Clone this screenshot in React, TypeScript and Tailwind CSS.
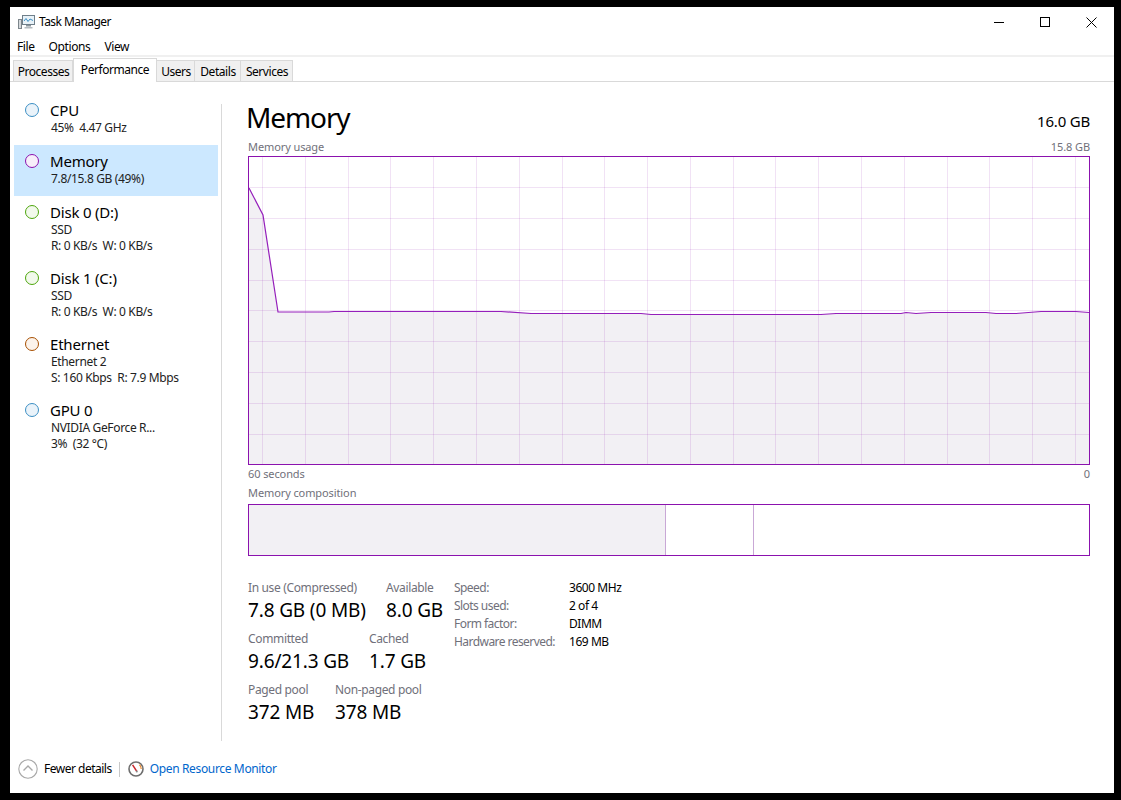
import React from "react";

const font = { fontFamily: '"Noto Sans", "Open Sans", sans-serif' };

const tabs = [
  { label: "Processes", w: "w-[60px]" },
  { label: "Performance", w: "w-[84px]", active: true },
  { label: "Users", w: "w-[38px]" },
  { label: "Details", w: "w-[46px]" },
  { label: "Services", w: "w-[52px]" },
];

const sideItems = [
  { name: "CPU", lines: ["45%  4.47 GHz"], ring: "border-[#3c8fc4]", fill: "bg-[#eaf3fa]", h: "h-[51px]" },
  { name: "Memory", lines: ["7.8/15.8 GB (49%)"], ring: "border-[#8b12ae]", fill: "bg-[#f7eefa]", h: "h-[51px]", active: true },
  { name: "Disk 0 (D:)", lines: ["SSD", "R: 0 KB/s  W: 0 KB/s"], ring: "border-[#4da60c]", fill: "bg-[#f2f9ec]", h: "h-[66px]" },
  { name: "Disk 1 (C:)", lines: ["SSD", "R: 0 KB/s  W: 0 KB/s"], ring: "border-[#4da60c]", fill: "bg-[#f2f9ec]", h: "h-[66px]" },
  { name: "Ethernet", lines: ["Ethernet 2", "S: 160 Kbps  R: 7.9 Mbps"], ring: "border-[#a74f01]", fill: "bg-[#fcf3eb]", h: "h-[66px]" },
  { name: "GPU 0", lines: ["NVIDIA GeForce R...", "3%  (32 °C)"], ring: "border-[#3c8fc4]", fill: "bg-[#eaf3fa]", h: "h-[66px]" },
];

const statRows = [
  [
    { label: "In use (Compressed)", value: "7.8 GB (0 MB)", w: "w-[138px]" },
    { label: "Available", value: "8.0 GB", w: "" },
  ],
  [
    { label: "Committed", value: "9.6/21.3 GB", w: "w-[121px]" },
    { label: "Cached", value: "1.7 GB", w: "" },
  ],
  [
    { label: "Paged pool", value: "372 MB", w: "w-[87px]" },
    { label: "Non-paged pool", value: "378 MB", w: "" },
  ],
];

const specs = [
  ["Speed:", "3600 MHz"],
  ["Slots used:", "2 of 4"],
  ["Form factor:", "DIMM"],
  ["Hardware reserved:", "169 MB"],
];

const linePoints =
  "0,31 14,58 29,155 80,155 85,154.5 252,154.5 282,156.5 392,156.5 402,157.5 572,157.5 587,156.5 652,156.5 657,155.5 667,156.5 682,155.5 737,155.5 747,156.5 767,156.5 792,154.5 827,154.5 840,155.5";

function MemoryChart() {
  const xs = Array.from({ length: 20 }, (_, i) => Math.round(13 + i * 42.79) + 0.5);
  const ys = [30, 61, 92, 123, 153, 184, 215, 246, 277].map((y) => y + 0.5);
  return (
    <svg width="840" height="307" className="block">
      <polygon points={`0,307 ${linePoints} 840,307`} fill="#f2f0f4" />
      {xs.map((x) => (
        <line key={x} x1={x} x2={x} y1="0" y2="307" stroke="#8b12ae" strokeOpacity="0.12" />
      ))}
      {ys.map((y) => (
        <line key={y} x1="0" x2="840" y1={y} y2={y} stroke="#8b12ae" strokeOpacity="0.12" />
      ))}
      <polyline points={linePoints} fill="none" stroke="#951fbb" strokeWidth="1.2" />
    </svg>
  );
}

function AppIcon() {
  return (
    <svg width="17" height="16" viewBox="0 0 17 16">
      <rect x="4.5" y="1.5" width="12" height="9" fill="#e8f2f8" stroke="#6f7f8a" />
      <polyline points="6,7 8,4.5 10,7.5 12,5 15,6.5" fill="none" stroke="#3c8fc4" />
      <rect x="8" y="11" width="5" height="1.5" fill="#8a959c" />
      <rect x="6.5" y="13" width="8" height="1.5" fill="#b5bcc1" />
      <rect x="0.5" y="5.5" width="3" height="9" fill="#d5d9dc" stroke="#7d868c" />
    </svg>
  );
}

function MonitorIcon() {
  return (
    <svg width="16" height="16" viewBox="0 0 16 16">
      <circle cx="8" cy="8" r="7" fill="#fff" stroke="#6d6d6d" strokeWidth="1.6" />
      <path d="M11.5 3.8 A5.4 5.4 0 0 1 13.2 8" fill="none" stroke="#e8872c" strokeWidth="1.2" />
      <line x1="4.6" y1="3.8" x2="8.8" y2="10.4" stroke="#c9252b" strokeWidth="1.5" />
      <circle cx="8.8" cy="10.6" r="1" fill="#8a8a8a" />
    </svg>
  );
}

export default function App() {
  return (
    <div className="h-[800px] w-[1121px] overflow-hidden bg-black pl-[10px] pt-[7px]" style={font}>
      <div className="flex h-[786px] w-[1104px] flex-col bg-white text-[12px] text-[#000]">
        {/* title bar */}
        <div className="flex h-[30px] items-center pl-[8px]">
          <AppIcon />
          <span className="ml-[4px] tracking-[-0.55px]">Task Manager</span>
          <div className="ml-auto flex items-center">
            <div className="flex h-[30px] w-[46px] items-center justify-center">
              <div className="h-px w-[10px] bg-black" />
            </div>
            <div className="flex h-[30px] w-[46px] items-center justify-center">
              <div className="h-[10px] w-[10px] border border-black" />
            </div>
            <div className="flex h-[30px] w-[46px] items-center justify-center">
              <svg width="11" height="11" viewBox="0 0 11 11">
                <path d="M0.5 0.5 L10.5 10.5 M10.5 0.5 L0.5 10.5" stroke="#000" fill="none" />
              </svg>
            </div>
          </div>
        </div>

        {/* menu */}
        <div className="flex h-[18px] items-center gap-[14px] pl-[7px] pt-[2px] tracking-[-0.4px]">
          <span>File</span>
          <span>Options</span>
          <span>View</span>
        </div>
        <div className="h-[2px] bg-[#f0f0f0]" />

        {/* tabs */}
        <div className="flex h-[25px] items-end border-b border-[#d9d9d9] pl-[3px]">
          {tabs.map((t) =>
            t.active ? (
              <div
                key={t.label}
                className={`${t.w} relative z-10 -mb-px flex h-[24px] justify-center border border-b-0 border-[#d9d9d9] bg-white pt-[2px] tracking-[-0.45px]`}
              >
                {t.label}
              </div>
            ) : (
              <div
                key={t.label}
                className={`${t.w} flex h-[21px] items-center justify-center border border-b-0 border-l-0 first:border-l border-[#d9d9d9] bg-[#f0f0f0] pl-[1px] pt-[2px] tracking-[-0.45px]`}
              >
                {t.label}
              </div>
            )
          )}
        </div>

        {/* body */}
        <div className="flex flex-1">
          {/* sidebar */}
          <div className="ml-[4px] mt-[12px] w-[204px]">
            {sideItems.map((it) => (
              <div
                key={it.name}
                className={`${it.h} ${it.active ? "bg-[#cce8ff]" : ""} flex pl-[11px] pt-[6px]`}
              >
                <div className={`${it.ring} ${it.fill} mt-[3px] h-[14px] w-[14px] rounded-full border`} />
                <div className="ml-[11px]">
                  <div className="h-[20px] text-[15px] leading-[20px] tracking-[-0.2px]">{it.name}</div>
                  {it.lines.map((l) => (
                    <div key={l} className="ml-px h-[16px] whitespace-pre leading-[16px] tracking-[-0.35px] text-[#222]">
                      {l}
                    </div>
                  ))}
                </div>
              </div>
            ))}
          </div>

          {/* divider */}
          <div className="ml-[3px] mt-[22px] h-[637px] w-px bg-[#d9d9d9]" />

          {/* main */}
          <div className="ml-[26px] w-[842px]">
            <div className="mt-[15px] flex h-[40px] items-center justify-between">
              <span className="-ml-[2px] text-[28px] leading-[40px] tracking-[-1.1px]">Memory</span>
              <span className="mt-[8px] text-[15px] tracking-[-0.2px]">16.0 GB</span>
            </div>
            <div className="flex h-[19px] items-center justify-between pt-[2px] text-[11px] tracking-[-0.1px] text-[#70707a]">
              <span>Memory usage</span>
              <span>15.8 GB</span>
            </div>
            <div className="h-[309px] border border-[#8b12ae]">
              <MemoryChart />
            </div>
            <div className="flex h-[19px] items-center justify-between text-[11px] tracking-[-0.1px] text-[#70707a]">
              <span>60 seconds</span>
              <span>0</span>
            </div>
            <div className="flex h-[20px] items-center pb-[2px] text-[11px] tracking-[-0.1px] text-[#70707a]">
              Memory composition
            </div>
            <div className="flex h-[52px] border border-[#8b12ae]">
              <div className="w-[417px] border-r border-[#c9a8d6] bg-[#f2f0f4]" />
              <div className="w-[88px] border-r border-[#c9a8d6]" />
            </div>

            {/* stats */}
            <div className="mt-[23px] flex">
              <div className="w-[206px]">
                {statRows.map((row, i) => (
                  <div key={i} className="flex h-[51px]">
                    {row.map((s) => (
                      <div key={s.label} className={s.w}>
                        <div className="h-[18px] whitespace-nowrap text-[12px] leading-[18px] tracking-[-0.35px] text-[#70707a]">
                          {s.label}
                        </div>
                        <div className="whitespace-nowrap text-[19px] leading-[26px] tracking-[-0.15px]">{s.value}</div>
                      </div>
                    ))}
                  </div>
                ))}
              </div>
              <div>
                {specs.map(([k, v]) => (
                  <div key={k} className="flex h-[18px] items-center tracking-[-0.45px]">
                    <span className="w-[115px] whitespace-nowrap tracking-[-0.55px] text-[#70707a]">{k}</span>
                    <span>{v}</span>
                  </div>
                ))}
              </div>
            </div>
          </div>
        </div>

        {/* footer */}
        <div className="flex h-[52px] items-center pl-[8px] pt-[4px]">
          <svg width="20" height="20" viewBox="0 0 20 20">
            <circle cx="10" cy="10" r="9.2" fill="#fff" stroke="#a8a8a8" strokeWidth="1.1" />
            <path d="M5.5 11.5 L10 7 L14.5 11.5" fill="none" stroke="#a8a8a8" strokeWidth="1.4" />
          </svg>
          <span className="ml-[6px] tracking-[-0.5px]">Fewer details</span>
          <div className="ml-[7px] h-[15px] w-px bg-[#c8c8c8]" />
          <div className="ml-[8px]">
            <MonitorIcon />
          </div>
          <span className="ml-[6px] tracking-[-0.35px] text-[#0066cc]">Open Resource Monitor</span>
        </div>
      </div>
    </div>
  );
}
